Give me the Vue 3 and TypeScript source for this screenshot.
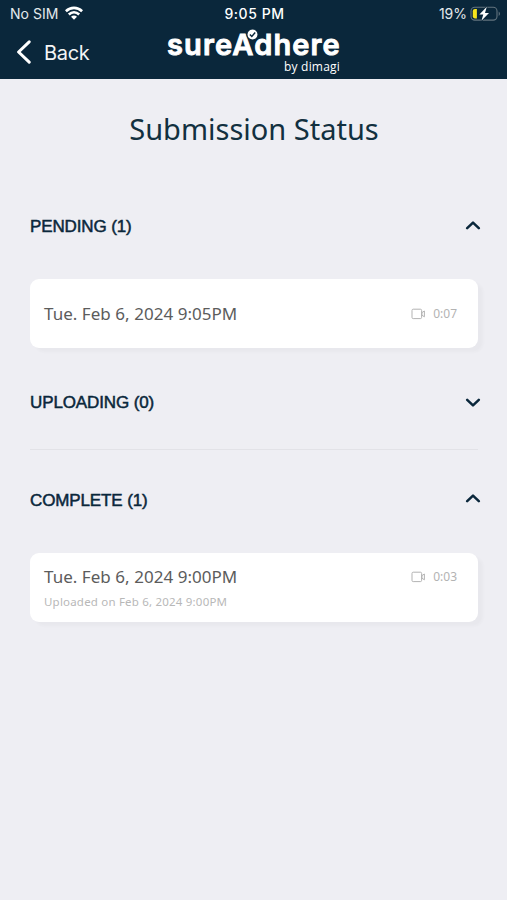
<script setup lang="ts">
import { ref } from 'vue'

interface Submission {
  date: string
  duration: string
  uploaded?: string
}

interface Section {
  id: string
  label: string
  open: boolean
  items: Submission[]
}

const sections = ref<Section[]>([
  { id: 'pending', label: 'PENDING', open: true, items: [{ date: 'Tue. Feb 6, 2024 9:05PM', duration: '0:07' }] },
  { id: 'uploading', label: 'UPLOADING', open: false, items: [] },
  {
    id: 'complete',
    label: 'COMPLETE',
    open: true,
    items: [{ date: 'Tue. Feb 6, 2024 9:00PM', duration: '0:03', uploaded: 'Uploaded on Feb 6, 2024 9:00PM' }],
  },
])
</script>

<template>
  <div class="screen">
    <header class="header">
      <div class="status">
        <div class="status-left">
          <span class="carrier">No SIM</span>
          <svg class="wifi" width="18" height="14" viewBox="0 0 18 14">
            <g fill="none" stroke="#fff" stroke-width="2.6">
              <path d="M.9 5.2C5.6 .7 12.4 .7 17.1 5.2" />
              <path d="M3.8 8.5C6.9 5.6 11.1 5.6 14.2 8.5" />
            </g>
            <path d="M6 10.8C7.8 9.2 10.2 9.2 12 10.8L9 13.8Z" fill="#fff" />
          </svg>
        </div>
        <span class="clock">9:05 PM</span>
        <div class="status-right">
          <span class="percent">19%</span>
          <svg class="battery" width="31" height="16" viewBox="0 0 31 16">
            <rect x="1" y="1.3" width="26" height="12.8" rx="3.8" fill="none" stroke="#63747f" stroke-width="1.1" />
            <path d="M28.7 5.5C30.4 6.2 30.4 9.2 28.7 9.9Z" fill="#63747f" />
            <path d="M5 3H6.9V12.4H5C3.7 12.4 2.8 11.5 2.8 10.2V5.2C2.8 3.9 3.7 3 5 3Z" fill="#f7e51c" />
            <path d="M16.8 .8L9.4 8.6H13.3L11.4 14.8L19 6.9H15Z" fill="#fff" stroke="#0a273b" stroke-width="1.4" paint-order="stroke" />
          </svg>
        </div>
      </div>
      <div class="nav">
        <button class="back" type="button">
          <svg width="16" height="24" viewBox="0 0 16 24">
            <path d="M13.2 1.8L2.6 12L13.2 22.2" fill="none" stroke="#fff" stroke-width="3" stroke-linecap="round" stroke-linejoin="round" />
          </svg>
          <span>Back</span>
        </button>
        <div class="brand">
          <div class="wordmark">
            sureAdhere
            <svg class="tick" width="13" height="13" viewBox="0 0 13 13">
              <circle cx="6.5" cy="6.5" r="5.6" fill="#fff" stroke="#0a273b" stroke-width="1.2" />
              <path d="M3.9 6.5L5.8 8.5L9.2 4.5" fill="none" stroke="#0a273b" stroke-width="1.4" />
            </svg>
          </div>
          <div class="byline">by dimagi</div>
        </div>
      </div>
    </header>

    <main class="content">
      <h1 class="title">Submission Status</h1>
      <section v-for="s in sections" :key="s.id" class="section" :class="s.id">
        <button class="toggle" type="button" @click="s.open = !s.open">
          <span class="label">{{ s.label }} ({{ s.items.length }})</span>
          <svg width="16" height="10" viewBox="0 0 16 10">
            <path :d="s.open ? 'M2.2 7.2L8 1.6L13.8 7.2' : 'M2.2 2.8L8 8.4L13.8 2.8'" fill="none" stroke="#0a273b" stroke-width="2.5" stroke-linecap="round" stroke-linejoin="round" />
          </svg>
        </button>
        <template v-if="s.open">
          <article v-for="item in s.items" :key="item.date" class="card">
            <div class="info">
              <span class="date">{{ item.date }}</span>
              <span v-if="item.uploaded" class="uploaded">{{ item.uploaded }}</span>
            </div>
            <div class="media">
              <svg width="15" height="12" viewBox="0 0 15 12">
                <g fill="none" stroke="#b3b3b3" stroke-width="1">
                  <rect x="1" y="1.2" width="9.6" height="9.4" rx="1.2" />
                  <path d="M10.9 4.6L13.4 3V8.8L10.9 7.2Z" />
                </g>
              </svg>
              <span class="duration">{{ item.duration }}</span>
            </div>
          </article>
        </template>
        <hr v-else class="rule" />
      </section>
    </main>
  </div>
</template>

<style>
body {
  margin: 0;
  background: #eeeef3;
}
</style>

<style scoped>
.screen {
  width: 507px;
  height: 900px;
  overflow: hidden;
  background: #eeeef3;
  font-family: 'Noto Sans', 'Open Sans', sans-serif;
}
button {
  border: 0;
  padding: 0;
  background: none;
  cursor: pointer;
}
svg {
  display: block;
  flex: none;
}
.header {
  box-sizing: border-box;
  height: 79px;
  background: #0a273b;
  color: #fff;
  font-family: Inter, 'Liberation Sans', sans-serif;
}
.status {
  display: grid;
  grid-template-columns: 1fr auto 1fr;
  align-items: center;
  height: 28px;
  padding: 0 6px 0 10px;
  font-size: 14px;
  line-height: 28px;
}
.status-left,
.status-right {
  display: flex;
  align-items: center;
}
.status-left {
  gap: 6px;
  color: #e4e9ec;
}
.status-right {
  justify-content: flex-end;
  gap: 3px;
  color: #e4e9ec;
}
.carrier {
  letter-spacing: 0.05px;
}
.wifi {
  margin-top: -2px;
}
.battery {
  margin-top: -1px;
}
.clock {
  margin-right: 2px;
  font-weight: 500;
  letter-spacing: 0.55px;
}
.nav {
  display: flex;
  align-items: flex-start;
  height: 51px;
  padding-left: 16px;
}
.back {
  display: flex;
  align-items: center;
  gap: 12px;
  width: 151px;
  height: 48px;
  color: #f3f5f6;
  font: 400 20px/24px Inter, 'Liberation Sans', sans-serif;
  letter-spacing: -0.3px;
}
.back span {
  padding-top: 1px;
}
.brand {
  width: 173px;
}
.wordmark {
  position: relative;
  height: 32px;
  font: 600 29px/34px Inter, sans-serif;
  letter-spacing: 1.15px;
  -webkit-text-stroke: 0.9px #fff;
  white-space: nowrap;
}
.tick {
  position: absolute;
  left: 78.5px;
  top: 0;
}
.byline {
  font: 500 12px/14px 'Open Sans', sans-serif;
  letter-spacing: 0.2px;
  text-align: right;
}
.content {
  padding: 0 29px 0 30px;
}
.title {
  margin: 0;
  padding-top: 32px;
  height: 35px;
  text-align: center;
  color: #12303f;
  font-size: 29px;
  font-weight: 400;
  line-height: 35px;
}
.section {
  display: flex;
  flex-direction: column;
}
.pending {
  padding-top: 68px;
}
.uploading {
  padding-top: 42px;
}
.complete {
  padding-top: 37px;
}
.toggle {
  display: flex;
  align-items: center;
  justify-content: space-between;
  height: 24px;
  margin-right: -3px;
}
.label {
  padding-top: 2px;
  color: #0a273b;
  font: 400 17px/24px 'Liberation Sans', Arial, sans-serif;
  letter-spacing: -0.12px;
  -webkit-text-stroke: 0.5px #0a273b;
}
.complete .label {
  padding-top: 3px;
}
.card {
  box-sizing: border-box;
  display: flex;
  justify-content: space-between;
  height: 69px;
  margin-top: 41px;
  padding: 0 21px 0 14px;
  border-radius: 9px;
  background: #fff;
  box-shadow: 5px 4px 3px rgba(60, 60, 60, 0.03);
}
.complete .card {
  margin-top: 42px;
}
.info {
  display: flex;
  flex-direction: column;
  justify-content: center;
}
.date {
  padding-top: 1px;
  color: #5c5c5c;
  font-size: 17px;
  line-height: 26px;
  letter-spacing: 0.04px;
}
.complete .date {
  padding-top: 3px;
}
.uploaded {
  color: #b8b8b8;
  font-size: 11.5px;
  line-height: 24px;
  letter-spacing: 0.2px;
}
.media {
  display: flex;
  align-items: center;
  gap: 7px;
  color: #b3b3b3;
  font-size: 12px;
}
.complete .media {
  height: 47px;
}
.rule {
  width: 100%;
  height: 1px;
  margin: 35px 0 0;
  border: 0;
  background: #e2e2e7;
}
</style>
